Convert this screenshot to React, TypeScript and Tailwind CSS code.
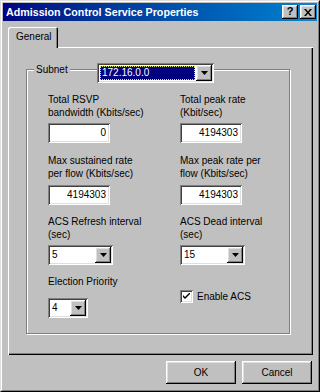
import React from "react";

const raised =
  "shadow-[inset_-1px_-1px_0_#000,inset_1px_1px_0_#fff,inset_-2px_-2px_0_#808080,inset_2px_2px_0_#dfdfdf]";
const sunken =
  "shadow-[inset_1px_1px_0_#808080,inset_-1px_-1px_0_#fff,inset_2px_2px_0_#404040,inset_-2px_-2px_0_#dfdfdf]";

function Arrow() {
  return (
    <svg width="7" height="4" viewBox="0 0 7 4">
      <path d="M0 0h7L3.5 4z" fill="#000" />
    </svg>
  );
}

function Combo({ value, w }: { value: string; w: string }) {
  return (
    <div className={`${w} h-[20px] bg-white ${sunken} p-[2px] flex`}>
      <div className="flex-1 pl-[2px] leading-[16px] text-black">{value}</div>
      <div className={`w-[16px] h-[16px] bg-[#c0c0c0] ${raised} flex items-center justify-center`}>
        <Arrow />
      </div>
    </div>
  );
}

function Field({ value }: { value: string }) {
  return (
    <div className={`w-[62px] h-[20px] bg-white ${sunken} pr-[4px] text-right leading-[20px] text-black`}>
      {value}
    </div>
  );
}

function Label({ lines }: { lines: string[] }) {
  return (
    <div className="leading-[13px]">
      {lines.map((l) => (
        <div key={l}>{l}</div>
      ))}
    </div>
  );
}

export default function App() {
  return (
    <div className="w-[320px] h-[392px] bg-[#c0c0c0] font-['Liberation_Sans',Arial,sans-serif] text-[10px] text-black select-none">
      <div className="w-full h-full border border-t-[#dfdfdf] border-l-[#dfdfdf] border-r-black border-b-black">
        <div className="w-full h-full border border-t-white border-l-white border-r-[#808080] border-b-[#808080] p-px flex flex-col">
          {/* Title bar */}
          <div className="h-[18px] bg-gradient-to-r from-[#000080] to-[#1084d0] flex items-center pl-[3px] pr-[1px]">
            <div className="flex-1 text-white font-bold text-[10.7px] leading-[18px] whitespace-nowrap">
              Admission Control Service Properties
            </div>
            <div className="flex gap-[2px]">
              <div className={`w-[16px] h-[14px] bg-[#c0c0c0] ${raised} flex items-center justify-center text-[11px] font-bold leading-none pb-px`}>
                ?
              </div>
              <div className={`w-[16px] h-[14px] bg-[#c0c0c0] ${raised} flex items-center justify-center`}>
                <svg width="8" height="7" viewBox="0 0 8 7">
                  <path d="M0 0h2l2 2.5L6 0h2L5 3.5 8 7H6L4 4.5 2 7H0l3-3.5z" fill="#000" />
                </svg>
              </div>
            </div>
          </div>

          {/* Body */}
          <div className="flex-1 pl-[5px] pr-[4px] pt-[6px] flex flex-col">
            <div className="flex">
              <div className="relative z-10 -mb-px w-[50px] h-[21px] bg-[#c0c0c0] rounded-tl-[2px] rounded-tr-[2px] shadow-[inset_1px_1px_0_#fff,inset_-1px_0_0_#000,inset_-2px_0_0_#808080] pl-[8px] pt-[3px] leading-[13px]">
                General
              </div>
            </div>
            <div className={`h-[308px] shadow-[inset_1px_1px_0_#fff,inset_-1px_-1px_0_#000,inset_-2px_-2px_0_#808080] pl-[18px] pt-[22px]`}>
              {/* Group box */}
              <div className="relative w-[264px] h-[265px] border border-[#808080] shadow-[inset_1px_1px_0_#fff,1px_1px_0_#fff]">
                <div className="absolute left-[7px] -top-[7px] px-[2px] bg-[#c0c0c0] leading-[13px]">Subnet</div>
                <div className={`absolute left-[70px] -top-[7px] w-[117px] h-[20px] bg-white ${sunken} p-[2px] flex`}>
                  <div className="flex-1 bg-white p-px">
                    <div className="h-full bg-[#000080] outline-1 outline-dotted outline-[#e8e850] -outline-offset-1 text-white leading-[14px] pl-[2px]">
                      172.16.0.0
                    </div>
                  </div>
                  <div className={`w-[16px] h-[16px] bg-[#c0c0c0] ${raised} flex items-center justify-center`}>
                    <Arrow />
                  </div>
                </div>

                <div className="pl-[21px] pt-[23px] grid grid-cols-[132px_1fr]">
                  {/* Row 1 */}
                  <div className="h-[61px] flex flex-col">
                    <Label lines={["Total RSVP", "bandwidth (Kbits/sec)"]} />
                    <div className="mt-[4px]"><Field value="0" /></div>
                  </div>
                  <div className="h-[61px] flex flex-col">
                    <Label lines={["Total peak rate", "(Kbit/sec)"]} />
                    <div className="mt-[4px]"><Field value="4194303" /></div>
                  </div>
                  {/* Row 2 */}
                  <div className="h-[61px] flex flex-col">
                    <Label lines={["Max sustained rate", "per flow (Kbits/sec)"]} />
                    <div className="mt-[5px]"><Field value="4194303" /></div>
                  </div>
                  <div className="h-[61px] flex flex-col">
                    <Label lines={["Max peak rate per", "flow (Kbits/sec)"]} />
                    <div className="mt-[5px]"><Field value="4194303" /></div>
                  </div>
                  {/* Row 3 */}
                  <div className="h-[60px] flex flex-col">
                    <Label lines={["ACS Refresh interval", "(sec)"]} />
                    <div className="mt-[4px]"><Combo value="5" w="w-[65px]" /></div>
                  </div>
                  <div className="h-[60px] flex flex-col">
                    <Label lines={["ACS Dead interval", "(sec)"]} />
                    <div className="mt-[4px]"><Combo value="15" w="w-[65px]" /></div>
                  </div>
                  {/* Row 4 */}
                  <div className="flex flex-col">
                    <Label lines={["Election Priority"]} />
                    <div className="mt-[10px]"><Combo value="4" w="w-[40px]" /></div>
                  </div>
                  <div className="flex items-center gap-[4px] pt-[15px] self-start">
                    <div className={`w-[13px] h-[13px] bg-white ${sunken} flex items-center justify-center`}>
                      <svg width="7" height="7" viewBox="0 0 7 7">
                        <path d="M0 2v2l2 2 5-5V-1L2 4z" fill="#000" />
                      </svg>
                    </div>
                    <div className="leading-[13px]">Enable ACS</div>
                  </div>
                </div>
              </div>
            </div>

            {/* Buttons */}
            <div className="flex justify-end gap-[6px] pt-[6px] pr-[1px]">
              <div className={`w-[70px] h-[23px] bg-[#c0c0c0] ${raised} flex items-center justify-center`}>OK</div>
              <div className={`w-[70px] h-[23px] bg-[#c0c0c0] ${raised} flex items-center justify-center`}>Cancel</div>
            </div>
          </div>
        </div>
      </div>
    </div>
  );
}
